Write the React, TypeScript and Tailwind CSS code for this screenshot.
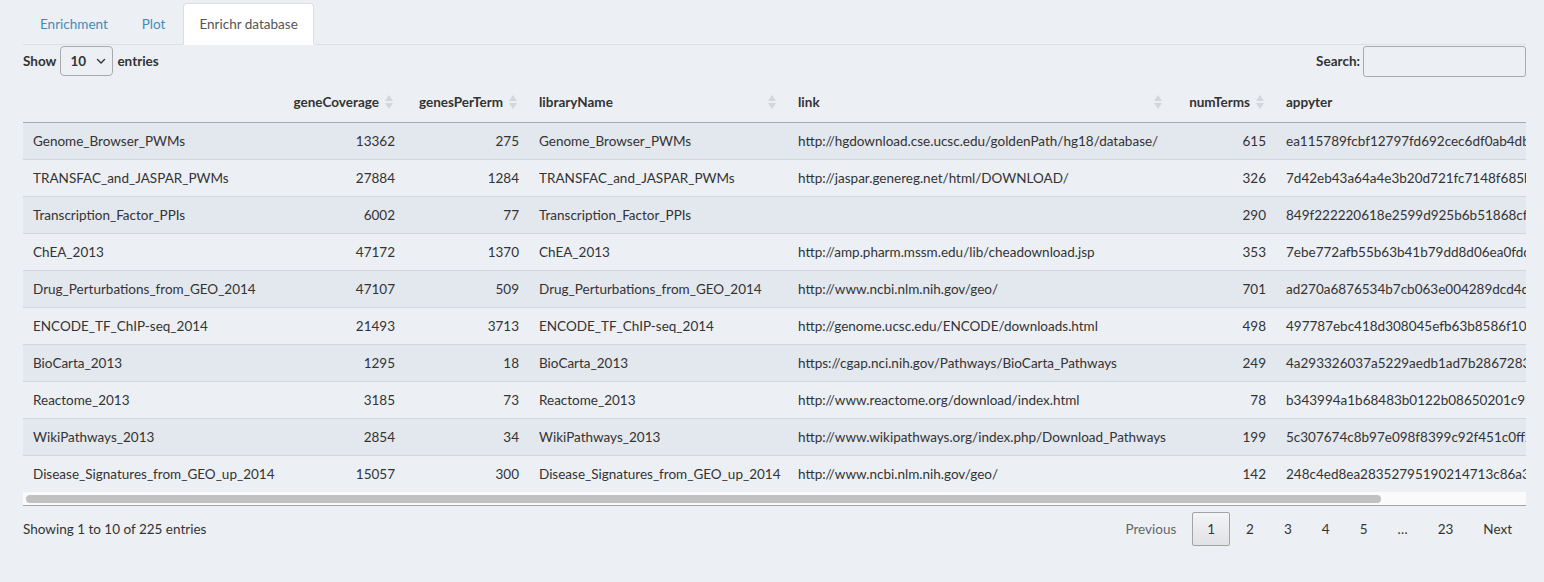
import React from "react";

type Row = {
  name: string;
  coverage: number;
  perTerm: number;
  link: string;
  numTerms: number;
  appyter: string;
};

const rows: Row[] = [
  { name: "Genome_Browser_PWMs", coverage: 13362, perTerm: 275, link: "http://hgdownload.cse.ucsc.edu/goldenPath/hg18/database/", numTerms: 615, appyter: "ea115789fcbf12797fd692cec6df0ab4dbc79c6a" },
  { name: "TRANSFAC_and_JASPAR_PWMs", coverage: 27884, perTerm: 1284, link: "http://jaspar.genereg.net/html/DOWNLOAD/", numTerms: 326, appyter: "7d42eb43a64a4e3b20d721fc7148f685b53b6b30" },
  { name: "Transcription_Factor_PPIs", coverage: 6002, perTerm: 77, link: "", numTerms: 290, appyter: "849f222220618e2599d925b6b51868cf1dab3763" },
  { name: "ChEA_2013", coverage: 47172, perTerm: 1370, link: "http://amp.pharm.mssm.edu/lib/cheadownload.jsp", numTerms: 353, appyter: "7ebe772afb55b63b41b79dd8d06ea0fdd9fa7b6b" },
  { name: "Drug_Perturbations_from_GEO_2014", coverage: 47107, perTerm: 509, link: "http://www.ncbi.nlm.nih.gov/geo/", numTerms: 701, appyter: "ad270a6876534b7cb063e004289dcd4d31e82b07" },
  { name: "ENCODE_TF_ChIP-seq_2014", coverage: 21493, perTerm: 3713, link: "http://genome.ucsc.edu/ENCODE/downloads.html", numTerms: 498, appyter: "497787ebc418d308045efb63b8586f10c526af51" },
  { name: "BioCarta_2013", coverage: 1295, perTerm: 18, link: "https://cgap.nci.nih.gov/Pathways/BioCarta_Pathways", numTerms: 249, appyter: "4a293326037a5229aedb1ad7b2867283357aa8c5" },
  { name: "Reactome_2013", coverage: 3185, perTerm: 73, link: "http://www.reactome.org/download/index.html", numTerms: 78, appyter: "b343994a1b68483b0122b08650201c9b313cf8b6" },
  { name: "WikiPathways_2013", coverage: 2854, perTerm: 34, link: "http://www.wikipathways.org/index.php/Download_Pathways", numTerms: 199, appyter: "5c307674c8b97e098f8399c92f451c0ff21cc5c7" },
  { name: "Disease_Signatures_from_GEO_up_2014", coverage: 15057, perTerm: 300, link: "http://www.ncbi.nlm.nih.gov/geo/", numTerms: 142, appyter: "248c4ed8ea28352795190214713c86a39fdd5ab6" },
];

const SortIcon = () => (
  <span className="absolute right-[12px] top-1/2 -translate-y-1/2 flex flex-col items-center gap-[2px]">
    <svg width="8" height="6" viewBox="0 0 8 6"><path d="M4 0L8 6H0Z" fill="#d3d6da" /></svg>
    <svg width="8" height="6" viewBox="0 0 8 6"><path d="M0 0H8L4 6Z" fill="#d3d6da" /></svg>
  </span>
);

const pages = ["2", "3", "4", "5"];

export default function App() {
  return (
    <div
      className="min-h-screen h-[582px] bg-[#ecf0f5] text-[#333] text-[13.5px] leading-[20px] pl-[23px] pr-[18px] pt-[3px] overflow-hidden"
      style={{ fontFamily: "Lato, 'Open Sans', sans-serif" }}
    >
      {/* Tabs */}
      <ul className="flex border-b border-[#dcdfe4]">
        <li className="mb-[-1px] ml-px mr-[2px]">
          <span className="block px-[15px] py-[10px] text-[#3c8dbc] border border-transparent">Enrichment</span>
        </li>
        <li className="mb-[-1px] mr-[2px]">
          <span className="block px-[15px] py-[10px] text-[#3c8dbc] border border-transparent">Plot</span>
        </li>
        <li className="mb-[-1px] mr-[2px]">
          <span className="block px-[15px] py-[10px] text-[#555] bg-white border border-[#dddddd] border-b-white rounded-t-[4px]">
            Enrichr database
          </span>
        </li>
      </ul>

      {/* Length + search */}
      <div className="flex items-center justify-between h-[32px]">
        <div className="flex items-center font-bold">
          <span>Show</span>
          <div className="mx-[4px] flex items-center justify-between w-[53px] h-[30px] border border-[#aaaaaa] rounded-[4px] pl-[9px] pr-[6px]">
            <span>10</span>
            <svg width="10" height="10" viewBox="0 0 10 10">
              <path d="M1.5 3.5L5 7L8.5 3.5" fill="none" stroke="#333" strokeWidth="1.4" strokeLinecap="round" strokeLinejoin="round" />
            </svg>
          </div>
          <span>entries</span>
        </div>
        <div className="flex items-center font-bold">
          <span className="mr-[3px]">Search:</span>
          <div className="w-[163px] h-[31px] border border-[#aaaaaa] rounded-[3px]" />
        </div>
      </div>

      {/* Table */}
      <div className="mt-[5px] w-full overflow-hidden">
        <table className="table-fixed border-collapse w-[1583px]">
          <colgroup>
            <col className="w-[259px]" />
            <col className="w-[123px]" />
            <col className="w-[124px]" />
            <col className="w-[259px]" />
            <col className="w-[386px]" />
            <col className="w-[102px]" />
            <col className="w-[330px]" />
          </colgroup>
          <thead>
            <tr className="border-b border-[#a6a9ae] font-bold">
              <th className="py-[10px] pl-[10px]"></th>
              <th className="relative py-[10px] pl-[10px] pr-[26px] text-right whitespace-nowrap">geneCoverage<SortIcon /></th>
              <th className="relative py-[10px] pl-[10px] pr-[26px] text-right whitespace-nowrap">genesPerTerm<SortIcon /></th>
              <th className="relative py-[10px] pl-[10px] pr-[26px] text-left whitespace-nowrap">libraryName<SortIcon /></th>
              <th className="relative py-[10px] pl-[10px] pr-[26px] text-left whitespace-nowrap">link<SortIcon /></th>
              <th className="relative py-[10px] pl-[10px] pr-[26px] text-right whitespace-nowrap">numTerms<SortIcon /></th>
              <th className="py-[10px] pl-[10px] text-left whitespace-nowrap">appyter</th>
            </tr>
          </thead>
          <tbody>
            {rows.map((r, i) => (
              <tr
                key={r.name}
                className={`${i % 2 === 0 ? "bg-[#e3e7ee]" : ""} ${i > 0 ? "border-t border-[#d3d6db]" : ""}`}
              >
                <td className="py-[8px] px-[10px] whitespace-nowrap">{r.name}</td>
                <td className="py-[8px] px-[10px] text-right whitespace-nowrap">{r.coverage}</td>
                <td className="py-[8px] px-[10px] text-right whitespace-nowrap">{r.perTerm}</td>
                <td className="py-[8px] px-[10px] whitespace-nowrap">{r.name}</td>
                <td className="py-[8px] px-[10px] whitespace-nowrap">{r.link}</td>
                <td className="py-[8px] px-[10px] text-right whitespace-nowrap">{r.numTerms}</td>
                <td className="py-[8px] px-[10px] whitespace-nowrap overflow-hidden">{r.appyter}</td>
              </tr>
            ))}
          </tbody>
        </table>
        {/* horizontal scrollbar */}
        <div className="h-[14px] bg-[#fafafa] border-b border-[#a2a5aa] flex items-center px-[3px]">
          <div className="h-[8px] w-[1355px] rounded-full bg-[#c1c1c1]" />
        </div>
      </div>

      {/* Footer */}
      <div className="mt-[6px] flex items-center justify-between">
        <div>Showing 1 to 10 of 225 entries</div>
        <div className="flex items-center">
          <span className="px-[14px] h-[34px] flex items-center text-[#666]">Previous</span>
          <span className="ml-[2px] px-[14px] h-[34px] min-w-[36px] flex items-center justify-center border border-[#a3a3a3] rounded-[2px] bg-gradient-to-b from-[#f3f4f6] to-[#e0e2e6]">1</span>
          {pages.map((p) => (
            <span key={p} className="ml-[2px] px-[14px] h-[34px] flex items-center justify-center">{p}</span>
          ))}
          <span className="ml-[2px] px-[14px] h-[34px] flex items-center">…</span>
          <span className="ml-[2px] px-[14px] h-[34px] flex items-center">23</span>
          <span className="ml-[2px] px-[14px] h-[34px] flex items-center">Next</span>
        </div>
      </div>
    </div>
  );
}
